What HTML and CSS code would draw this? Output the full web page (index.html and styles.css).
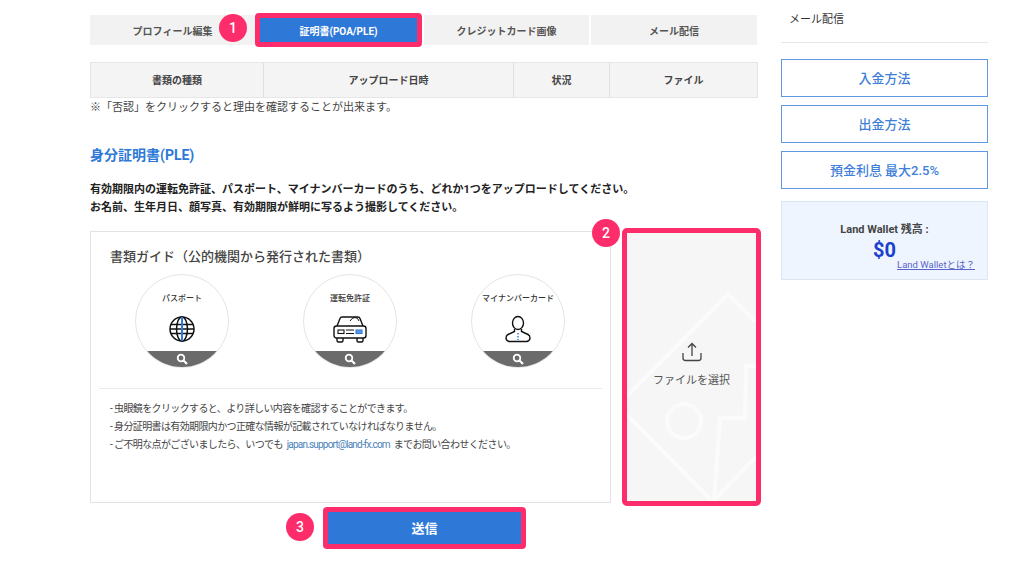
FILE: index.html
```html
<!DOCTYPE html>
<html lang="ja">

<head>
    <meta charset="UTF-8">
    <meta name="viewport" content="width=device-width, initial-scale=1.0">
    <title>証明書</title>
    <link rel="stylesheet" href="styles.css">
</head>

<body>
    <div class="page">
        <div class="main">
            <div class="tabs">
                <div class="tab tab-first">プロフィール編集</div>
                <div class="tab tab-active">証明書(POA/PLE)<span class="badge badge1">1</span></div>
                <div class="tab tab-third">クレジットカード画像</div>
                <div class="tab tab-last">メール配信</div>
            </div>

            <div class="doc-head">
                <div class="cell cell1">書類の種類</div>
                <div class="cell cell2">アップロード日時</div>
                <div class="cell cell3">状況</div>
                <div class="cell cell4">ファイル</div>
            </div>
            <p class="note">※「否認」をクリックすると理由を確認することが出来ます。</p>

            <h2 class="title">身分証明書(PLE)</h2>
            <p class="lead">有効期限内の運転免許証、パスポート、マイナンバーカードのうち、どれか1つをアップロードしてください。<br>お名前、生年月日、顔写真、有効期限が鮮明に写るよう撮影してください。</p>

            <div class="upload-row">
                <div class="guide">
                    <h3 class="guide-title">書類ガイド（公的機関から発行された書類）</h3>
                    <div class="circles">
                        <div class="circle">
                            <span class="circle-label">パスポート</span>
                            <svg class="circle-icon" width="28" height="28" viewBox="0 0 28 28" fill="none" stroke="#111" stroke-width="1.5">
                                <circle cx="14" cy="14" r="12"/>
                                <ellipse cx="14" cy="14" rx="5.5" ry="12"/>
                                <path d="M3 9.500h22M3 18.500h22M2 14h24"/>
                                <path d="M14 2v24" stroke="#2f7bd9" stroke-width="2"/>
                            </svg>
                            <div class="zoom-bar"><svg width="12" height="12" viewBox="0 0 12 12" fill="none" stroke="#fff"><circle cx="5" cy="5" r="3.300" stroke-width="1.800"/><path d="M7.500 7.500l3.500 3.500" stroke-width="2.200"/></svg></div>
                        </div>
                        <div class="circle">
                            <span class="circle-label">運転免許証</span>
                            <svg class="circle-icon" width="34" height="28" viewBox="0 0 34 28" fill="none" stroke="#111" stroke-width="1.400">
                                <path d="M4 11l3-7.500q.6-1.500 2-1.500h16q1.400 0 2 1.500l3 7.500"/>
                                <path d="M17 6q2-3.500 5-3.500t4 3.500" stroke-width="1"/>
                                <rect x="1" y="11" width="32" height="12" rx="2.500"/>
                                <path d="M4 23v2.500q0 1.500 1.500 1.500h3q1.500 0 1.500-1.500V23M24 23v2.500q0 1.500 1.500 1.500h3q1.500 0 1.500-1.500V23"/>
                                <rect x="5" y="15" width="6" height="3.500" stroke-width="1.100"/>
                                <path d="M13 15h8M13 18.500h8" stroke-width="1.100"/>
                                <rect x="23" y="15" width="6" height="3.500" fill="#5b9be6" stroke="#2f7bd9" stroke-width="1.100"/>
                            </svg>
                            <div class="zoom-bar"><svg width="12" height="12" viewBox="0 0 12 12" fill="none" stroke="#fff"><circle cx="5" cy="5" r="3.300" stroke-width="1.800"/><path d="M7.500 7.500l3.500 3.500" stroke-width="2.200"/></svg></div>
                        </div>
                        <div class="circle">
                            <span class="circle-label">マイナンバーカード</span>
                            <svg class="circle-icon" width="26" height="28" viewBox="0 0 26 28" fill="none" stroke="#111" stroke-width="1.400">
                                <ellipse cx="13" cy="8" rx="5.500" ry="6.500"/>
                                <path d="M9.500 14v2.500L3 19.500q-2 1-2 3.500t3 3.500h18q3-1 3-3.500t-2-3.500l-6.500-3V14"/>
                                <path d="M13 18v7" stroke="#2f7bd9" stroke-width="1.500" stroke-dasharray="1.500 1.500"/>
                            </svg>
                            <div class="zoom-bar"><svg width="12" height="12" viewBox="0 0 12 12" fill="none" stroke="#fff"><circle cx="5" cy="5" r="3.300" stroke-width="1.800"/><path d="M7.500 7.500l3.500 3.500" stroke-width="2.200"/></svg></div>
                        </div>
                    </div>
                    <hr class="guide-line">
                    <ul class="guide-notes">
                        <li>- 虫眼鏡をクリックすると、より詳しい内容を確認することができます。</li>
                        <li>- 身分証明書は有効期限内かつ正確な情報が記載されていなければなりません。</li>
                        <li>- ご不明な点がございましたら、いつでも <a href="#" class="mail">japan.support@land-fx.com</a> までお問い合わせください。</li>
                    </ul>
                </div>

                <div class="upload">
                    <span class="badge badge2">2</span>
                    <svg class="upload-bg" width="129" height="268" viewBox="0 0 129 268" fill="none" stroke="#fbfbfb" stroke-width="4">
                        <path d="M0 163L101 61L129 89"/>
                        <path d="M0 182L85 268"/>
                        <circle cx="57" cy="188" r="17"/>
                        <path d="M87 268L93 185H118L119 133H129"/>
                        <path d="M88 266L129 224"/>
                    </svg>
                    <svg class="upload-icon" width="20" height="20" viewBox="0 0 20 20" fill="none" stroke="#444" stroke-width="1.300">
                        <path d="M1 11v5q0 2.500 2.500 2.500h13q2.500 0 2.500-2.500v-5"/>
                        <path d="M10 14V2M6 5.500L10 1.500l4 4"/>
                    </svg>
                    <span class="upload-text">ファイルを選択</span>
                </div>
            </div>

            <div class="submit-row">
                <button class="submit">送信<span class="badge badge3">3</span></button>
            </div>
        </div>

        <div class="side">
            <div class="side-title">メール配信</div>
            <a href="#" class="side-btn">入金方法</a>
            <a href="#" class="side-btn">出金方法</a>
            <a href="#" class="side-btn">預金利息 最大2.5%</a>
            <div class="wallet">
                <div class="wallet-label">Land Wallet 残高 :</div>
                <div class="wallet-amount">$0</div>
                <a href="#" class="wallet-link">Land Walletとは？</a>
            </div>
        </div>
    </div>
</body>

</html>
```

FILE: styles.css
```css
* {
    margin: 0;
    padding: 0;
    box-sizing: border-box;
}

body {
    font-family: Roboto, "Noto Sans CJK JP", sans-serif;
    color: #333;
    background: #fff;
}

.page {
    display: flex;
    padding: 13px 0 0 90px;
}

.main {
    width: 671px;
}

/* tabs */
.tabs {
    display: flex;
    align-items: center;
    width: 667px;
    height: 34px;
}

.tab {
    height: 30px;
    background: #f2f2f2;
    font-size: 10px;
    font-weight: 700;
    color: #555;
    display: flex;
    align-items: center;
    justify-content: center;
    position: relative;
}

.tab-first {
    width: 165px;
}

.tab-active {
    width: 167px;
    height: 34px;
    background: #2e79d8;
    color: #fff;
    border: 5px solid #fd2d6c;
    border-radius: 4px;
}

.tab-third {
    width: 165px;
    margin: 0 2px;
}

.tab-last {
    width: 166px;
}

.badge {
    position: absolute;
    width: 28px;
    height: 28px;
    border-radius: 50%;
    background: #fd2d6c;
    color: #fff;
    font-family: Roboto, sans-serif;
    font-size: 14px;
    font-weight: 500;
    line-height: 28px;
    text-align: center;
}

.badge1 {
    left: -41px;
    top: -4px;
}

.badge2 {
    left: -35px;
    top: -14px;
}

.badge3 {
    left: -42px;
    top: 1px;
}

/* document table head */
.doc-head {
    display: flex;
    width: 668px;
    height: 36px;
    margin-top: 15px;
    background: #f4f4f4;
    border: 1px solid #e6e6e6;
}

.cell {
    display: flex;
    align-items: center;
    justify-content: center;
    padding-bottom: 2px;
    font-size: 10px;
    font-weight: 700;
    color: #444;
    border-right: 1px solid #e0e0e0;
}

.cell1 {
    width: 173px;
}

.cell2 {
    width: 250px;
}

.cell3 {
    width: 96px;
}

.cell4 {
    flex: 1;
    border-right: 0;
}

.note {
    font-size: 11px;
    line-height: 16px;
    margin-top: 2px;
    color: #444;
}

.title {
    font-size: 14px;
    line-height: 20px;
    font-weight: 700;
    color: #2e79d8;
    margin-top: 29px;
}

.lead {
    font-size: 11px;
    font-weight: 700;
    line-height: 17.5px;
    margin-top: 16px;
    color: #222;
}

/* guide card + upload */
.upload-row {
    display: flex;
    align-items: center;
    justify-content: space-between;
    margin-top: 12px;
}

.guide {
    width: 521px;
    height: 272px;
    border: 1px solid #e2e2e2;
    padding: 16px 8px 0;
}

.guide-title {
    font-size: 13px;
    line-height: 18px;
    font-weight: 500;
    padding-left: 11px;
    color: #444;
}

.circles {
    display: flex;
    gap: 74px;
    margin: 8px 0 0 36px;
}

.circle {
    width: 94px;
    height: 94px;
    border: 1px solid #e4e4e4;
    border-radius: 50%;
    overflow: hidden;
    display: flex;
    flex-direction: column;
    align-items: center;
    position: relative;
}

.circle-label {
    font-size: 8px;
    font-weight: 500;
    line-height: 12px;
    margin-top: 18px;
    color: #333;
}

.circle-icon {
    position: absolute;
    top: 40px;
    left: 50%;
    transform: translateX(-50%);
}

.zoom-bar {
    position: absolute;
    left: 0;
    right: 0;
    bottom: 0;
    height: 16px;
    background: #6b6b6b;
    display: flex;
    align-items: center;
    justify-content: center;
}

.guide-line {
    border: 0;
    border-top: 1px solid #eaeaea;
    margin-top: 20px;
}

.guide-notes {
    list-style: none;
    padding: 11px 0 0 11px;
    font-size: 10px;
    line-height: 18px;
    letter-spacing: -0.62px;
    color: #444;
}

.mail {
    color: #4a7fb8;
    letter-spacing: -0.8px;
    margin: 0 2px;
    text-decoration: none;
}

.upload {
    width: 139px;
    height: 278px;
    background: #f6f6f6;
    border: 5px solid #fd2d6c;
    border-radius: 5px;
    display: flex;
    flex-direction: column;
    align-items: center;
    justify-content: center;
    position: relative;
}

.upload-bg {
    position: absolute;
    left: 0;
    top: 0;
}

.upload-icon {
    position: relative;
    margin-top: -3px;
}

.upload-text {
    position: relative;
    font-size: 11px;
    line-height: 16px;
    margin-top: 11px;
    color: #555;
}

.submit-row {
    display: flex;
    padding-left: 233px;
    margin-top: 1px;
}

.submit {
    width: 203px;
    height: 42px;
    padding-bottom: 2px;
    background: #2e79d8;
    color: #fff;
    border: 5px solid #fd2d6c;
    border-radius: 4px;
    font-family: inherit;
    font-size: 13px;
    font-weight: 700;
    position: relative;
}

/* right column */
.side {
    width: 207px;
    margin-left: 20px;
}

.side-title {
    font-size: 11px;
    line-height: 14px;
    padding: 0 0 15px 8px;
    border-bottom: 1px solid #e6e6ea;
    color: #333;
}

.side-btn {
    display: flex;
    align-items: center;
    justify-content: center;
    height: 38px;
    margin-top: 8px;
    padding-bottom: 2px;
    border: 1px solid #5f97e0;
    font-size: 13px;
    font-weight: 500;
    color: #3f7fd9;
    text-decoration: none;
}

.side-title + .side-btn {
    margin-top: 16px;
}

.wallet {
    height: 79px;
    margin-top: 12px;
    padding: 21px 12px 0;
    background: #eef5fe;
    border: 1px solid #dbe5f3;
    display: flex;
    flex-direction: column;
    align-items: center;
    position: relative;
}

.wallet-label {
    font-size: 11px;
    line-height: 14px;
    font-weight: 700;
    color: #444;
}

.wallet-amount {
    font-size: 20px;
    line-height: 24px;
    margin-top: 1px;
    font-weight: 700;
    color: #1c3fce;
}

.wallet-link {
    align-self: flex-end;
    font-size: 9.5px;
    line-height: 11px;
    margin-top: -3px;
    color: #5a62cc;
}
```
